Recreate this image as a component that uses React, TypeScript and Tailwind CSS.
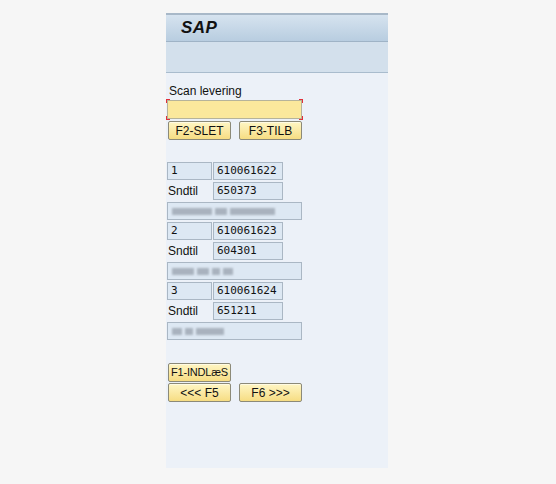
import React from "react";

const font = { fontFamily: "'Liberation Sans', Arial, sans-serif" };

function Btn({ label, w = "w-[63px]", small = false }: { label: string; w?: string; small?: boolean }) {
  return (
    <div
      className={`${w} h-[19px] flex items-center justify-center whitespace-nowrap rounded-[2px] border border-[#8c8a78] bg-gradient-to-b from-[#fff6c4] to-[#f6dd82] ${small ? "text-[11px] tracking-[-0.2px]" : "text-[12px]"} text-[#111] shadow-[inset_0_1px_0_#fffbe2]`}
    >
      {label}
    </div>
  );
}

function Box({ w, children }: { w: string; children?: React.ReactNode }) {
  return (
    <div
      className={`${w} h-[18px] flex items-center pl-[3px] border border-[#aab7c4] bg-[#dde8f3] text-[11px] text-[#111]`}
    >
      {children}
    </div>
  );
}

function Blur({ widths }: { widths: number[] }) {
  return (
    <div className="w-[135px] h-[18px] flex items-center gap-[3px] pl-[4px] border border-[#aab7c4] bg-[#dde8f3]">
      {widths.map((w, i) => (
        <span
          key={i}
          className="h-[7px] bg-[#98a1ad] blur-[1.3px] opacity-75"
          style={{ width: w }}
        />
      ))}
    </div>
  );
}

function Entry({ n, num, snd, blur }: { n: string; num: string; snd: string; blur: number[] }) {
  const mono = { fontFamily: "'DejaVu Sans Mono', 'Liberation Mono', monospace" };
  return (
    <div className="flex flex-col gap-[2px]">
      <div className="flex gap-[1px]">
        <Box w="w-[45px]">
          <span style={mono}>{n}</span>
        </Box>
        <Box w="w-[70px]">
          <span style={mono}>{num}</span>
        </Box>
      </div>
      <div className="flex gap-[1px] items-center">
        <div className="w-[45px] text-[12px] text-[#111] pl-[1px]">Sndtil</div>
        <Box w="w-[70px]">
          <span style={mono}>{snd}</span>
        </Box>
      </div>
      <Blur widths={blur} />
    </div>
  );
}

export default function App() {
  return (
    <div className="w-[556px] h-[484px] bg-[#f6f6f6] pl-[166px] pt-[13px]" style={font}>
      <div className="w-[222px] h-[455px] flex flex-col bg-[#ecf1f8]">
        <div className="h-[29px] border-t-2 border-[#a8b8c8] bg-gradient-to-b from-[#d6e3ef] to-[#b8cde0] flex items-center pl-[15px] border-b border-b-[#9fb3c6]">
          <span className="text-[17px] font-bold italic text-[#111] tracking-[0.5px]" style={{ fontFamily: "Arial, 'Liberation Sans', sans-serif" }}>
            SAP
          </span>
        </div>
        <div className="h-[31px] bg-[#d3e0ec] border-b border-[#a9bccd]" />
        <div className="flex flex-col pl-[1px] pt-[10px]">
          <div className="text-[12px] text-[#111] pl-[2px] h-[16px] leading-[16px]">Scan levering</div>
          <div className="relative w-[135px] h-[19px] mt-[1px] border border-[#b6b39a] bg-[#fbe89c]">
            <span className="absolute -left-[2px] -top-[2px] w-[4px] h-[4px] border-l border-t border-[#e0303a]" />
            <span className="absolute -right-[2px] -top-[2px] w-[4px] h-[4px] border-r border-t border-[#e0303a]" />
            <span className="absolute -left-[2px] -bottom-[2px] w-[4px] h-[4px] border-l border-b border-[#e0303a]" />
            <span className="absolute -right-[2px] -bottom-[2px] w-[4px] h-[4px] border-r border-b border-[#e0303a]" />
          </div>
          <div className="flex gap-[8px] mt-[2px] pl-[1px]">
            <Btn label="F2-SLET" />
            <Btn label="F3-TILB" />
          </div>
          <div className="flex flex-col gap-[2px] mt-[22px]">
            <Entry n="1" num="610061622" snd="650373" blur={[40, 12, 45]} />
            <Entry n="2" num="610061623" snd="604301" blur={[22, 12, 8, 10]} />
            <Entry n="3" num="610061624" snd="651211" blur={[10, 8, 28]} />
          </div>
          <div className="flex flex-col gap-[1px] mt-[23px] pl-[1px]">
            <Btn label="F1-INDLæS" small />
            <div className="flex gap-[8px]">
              <Btn label="<<< F5" />
              <Btn label="F6 >>>" />
            </div>
          </div>
        </div>
      </div>
    </div>
  );
}
